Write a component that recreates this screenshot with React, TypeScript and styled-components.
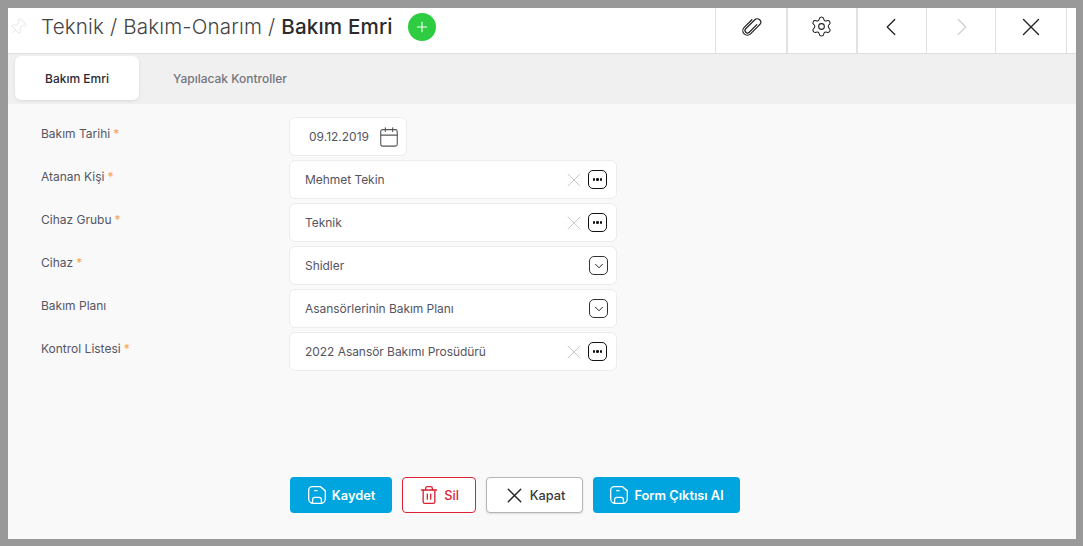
import React from "react";
import styled, { createGlobalStyle } from "styled-components";
import { Settings, ChevronLeft, ChevronRight, X, Calendar, Plus, Pin, ChevronDown, Trash2 } from "lucide-react";

const Global = createGlobalStyle`
  html, body { margin: 0; padding: 0; background: #999; }
  body { font-family: Inter, "Noto Sans", sans-serif; }
  * { box-sizing: border-box; }
`;

const Frame = styled.div`
  width: 1083px; height: 546px; padding: 8px 7px 7px 8px; background: #999; display: flex;
`;
const Win = styled.div`
  flex: 1; display: flex; flex-direction: column; background: #f9f9f9; min-width: 0;
`;
const Header = styled.header`
  height: 46px; flex: none; display: flex; align-items: stretch; background: #fff;
  border-bottom: 1px solid #dedede; padding-right: 9px;
`;
const PinSlot = styled.div`
  width: 34px; flex: none; display: flex; align-items: center; padding: 0 0 8px 1px; color: #dcdcdc;
  svg { transform: rotate(42deg); }
`;
const Title = styled.h1`
  margin: 0; font-size: 20.6px; font-weight: 300; color: #444; display: flex; align-items: center;
  white-space: pre; padding-bottom: 9px; margin-left: -1px; letter-spacing: 0.15px;
  b { font-weight: 500; color: #2b2b2b; }
`;
const AddBtn = styled.button`
  width: 28px; height: 28px; margin-left: 15px; margin-bottom: 8px; align-self: center; border: 0; padding: 0; border-radius: 50%;
  background: #2ecc40; color: #fff; display: flex; align-items: center; justify-content: center;
`;
const HeaderCells = styled.div`
  margin-left: auto; display: flex;
`;
const HeaderCell = styled.button<{ $w: number; $dim?: boolean; $thick?: boolean }>`
  width: ${(p) => p.$w}px; background: #fff; border: 0; border-left: ${(p) => (p.$thick ? 2 : 1)}px solid #e2e2e2;
  padding: 0 ${(p) => (p.$thick ? 2 : 0)}px 8px ${(p) => (p.$dim ? 2 : 0)}px;
  display: flex; align-items: center; justify-content: center;
  color: ${(p) => (p.$dim ? "#d0d0d0" : "#222")};
  &:last-child { border-right: 1px solid #e2e2e2; }
`;
const Tabs = styled.nav`
  height: 50px; flex: none; background: #f0f0f0; display: flex; padding: 2px 0 4px 7px;
`;
const Tab = styled.div<{ $active?: boolean }>`
  width: 124px; height: 44px; display: flex; align-items: center; justify-content: center;
  font-size: 12px; font-weight: 500;
  color: ${(p) => (p.$active ? "#2a2a35" : "#74747e")};
  background: ${(p) => (p.$active ? "#fff" : "transparent")};
  border-radius: 6px;
  box-shadow: ${(p) => (p.$active ? "0 1px 3px rgba(0,0,0,.1)" : "none")};
`;
const TabPlain = styled(Tab)`
  width: 182px;
`;
const Body = styled.main`
  flex: 1; display: flex; flex-direction: column; padding: 13px 0 26px 33px;
`;
const Form = styled.div`
  display: flex; flex-direction: column; gap: 4px;
`;
const Row = styled.div`
  display: flex; align-items: flex-start;
`;
const Label = styled.label`
  width: 248px; flex: none; font-size: 12px; color: #555561; padding-top: 9px; line-height: 15px;
  span { color: #f5a259; margin-left: 3px; }
`;
const Field = styled.div<{ $w: number; $pl: number; $pr: number }>`
  width: ${(p) => p.$w}px; height: 39px; background: #fff; border: 1px solid #ececec; border-radius: 6px;
  display: flex; align-items: center; padding: 0 ${(p) => p.$pr}px 0 ${(p) => p.$pl}px;
  font-size: 12px; color: #555561;
`;
const Value = styled.div<{ $tight?: boolean }>`
  flex: 1; white-space: nowrap; letter-spacing: ${(p) => (p.$tight ? "-0.05px" : "0")};
`;
const ClearIcon = styled.span`
  display: flex; color: #c4c4c4; margin-right: 2px;
`;
const SquareBtn = styled.span<{ $soft?: boolean }>`
  width: 19px; height: 19px; border: 1.4px solid ${(p) => (p.$soft ? "#333" : "#111")}; border-radius: 5px;
  display: flex; align-items: center; justify-content: center; color: #222;
  margin-right: ${(p) => (p.$soft ? -1 : 0)}px;
`;
const Dots = styled.span`
  display: flex; gap: 1px;
  i { width: 2.5px; height: 2.5px; background: #111; border-radius: 50%; }
`;
const CalIcon = styled.span`
  display: flex; color: #555;
`;
const Actions = styled.div`
  margin-top: auto; display: flex; gap: 10px; padding-left: 249px;
`;
const ActionBtn = styled.button<{ $kind: "primary" | "danger" | "plain"; $w: number; $gap: number }>`
  width: ${(p) => p.$w}px; height: 36px; border-radius: 4px; display: flex; align-items: center; justify-content: center; gap: ${(p) => p.$gap}px;
  font: ${(p) => (p.$kind === "primary" ? 600 : 500)} 12.8px Inter, sans-serif;
  padding: 0 ${(p) => (p.$kind === "plain" ? 2 : 0)}px 0 0;
  background: ${(p) => (p.$kind === "primary" ? "#00a5e0" : "#fff")};
  color: ${(p) => (p.$kind === "primary" ? "#fff" : p.$kind === "danger" ? "#dc2235" : "#3a3a3a")};
  border: ${(p) => (p.$kind === "primary" ? "0" : p.$kind === "danger" ? "1px solid #dc2235" : "1px solid #b5b5b5")};
  box-shadow: ${(p) => (p.$kind === "plain" ? "0 1px 2px rgba(0,0,0,.12)" : "none")};
`;

const SaveIcon = () => (
  <svg width="20" height="20" viewBox="0 0 20 20" fill="none" stroke="currentColor" strokeWidth="1.3">
    <path d="M5.2 1.7h8.3l4.8 4.2v7.9a4.5 4.5 0 0 1-4.5 4.5H6.2a4.5 4.5 0 0 1-4.5-4.5V5.2a3.5 3.5 0 0 1 3.5-3.5z" />
    <path d="M7.2 5.6h3.4" />
    <path d="M5.6 18v-3.4a2.2 2.2 0 0 1 2.2-2.2h4.4a2.2 2.2 0 0 1 2.2 2.2V18" />
  </svg>
);

const ClipIcon = () => (
  <svg width="27" height="27" viewBox="0 0 24 24" fill="none" stroke="currentColor" strokeWidth="1.05" strokeLinecap="round">
    <path transform="rotate(45 12 12)" d="M14.2 7.5V17a2.2 2.2 0 0 1-4.4 0V5.7a3.1 3.1 0 0 1 6.2 0" />
    <path transform="rotate(45 12 12)" d="M16 5.7V17.2a4 4 0 0 1-8 0V7.5" />
  </svg>
);

const fields: { label: string; req: boolean; value: string; kind: "dots" | "down" }[] = [
  { label: "Atanan Kişi", req: true, value: "Mehmet Tekin", kind: "dots" },
  { label: "Cihaz Grubu", req: true, value: "Teknik", kind: "dots" },
  { label: "Cihaz", req: true, value: "Shidler", kind: "down" },
  { label: "Bakım Planı", req: false, value: "Asansörlerinin Bakım Planı", kind: "down" },
  { label: "Kontrol Listesi", req: true, value: "2022 Asansör Bakımı Prosüdürü", kind: "dots" },
];

export default function App() {
  return (
    <Frame>
      <Global />
      <Win>
        <Header>
          <PinSlot><Pin size={18} strokeWidth={1} /></PinSlot>
          <Title>Teknik / Bakım-Onarım / <b>Bakım Emri</b></Title>
          <AddBtn><Plus size={16} strokeWidth={1.6} /></AddBtn>
          <HeaderCells>
            <HeaderCell $w={71}><ClipIcon /></HeaderCell>
            <HeaderCell $w={70} $thick><Settings size={23} strokeWidth={1.1} /></HeaderCell>
            <HeaderCell $w={70} $thick><ChevronLeft size={30} strokeWidth={1} /></HeaderCell>
            <HeaderCell $w={69} $dim><ChevronRight size={30} strokeWidth={1} /></HeaderCell>
            <HeaderCell $w={72}><X size={30} strokeWidth={1.1} /></HeaderCell>
          </HeaderCells>
        </Header>
        <Tabs>
          <Tab $active>Bakım Emri</Tab>
          <TabPlain>Yapılacak Kontroller</TabPlain>
        </Tabs>
        <Body>
          <Form>
            <Row>
              <Label>Bakım Tarihi<span>*</span></Label>
              <Field $w={118} $pl={19} $pr={6}>
                <Value>09.12.2019</Value>
                <CalIcon><Calendar size={22} strokeWidth={1.2} /></CalIcon>
              </Field>
            </Row>
            {fields.map((f) => (
              <Row key={f.label}>
                <Label>{f.label}{f.req && <span>*</span>}</Label>
                <Field $w={328} $pl={15} $pr={9}>
                  <Value $tight>{f.value}</Value>
                  {f.kind === "dots" ? (
                    <>
                      <ClearIcon><X size={24} strokeWidth={0.9} /></ClearIcon>
                      <SquareBtn><Dots><i /><i /><i /></Dots></SquareBtn>
                    </>
                  ) : (
                    <SquareBtn $soft><ChevronDown size={14} strokeWidth={1.7} /></SquareBtn>
                  )}
                </Field>
              </Row>
            ))}
          </Form>
          <Actions>
            <ActionBtn $kind="primary" $w={102} $gap={5}><SaveIcon />Kaydet</ActionBtn>
            <ActionBtn $kind="danger" $w={74} $gap={5}><Trash2 size={20} strokeWidth={1.6} />Sil</ActionBtn>
            <ActionBtn $kind="plain" $w={97} $gap={3}><X size={25} strokeWidth={1.3} color="#222" />Kapat</ActionBtn>
            <ActionBtn $kind="primary" $w={147} $gap={5}><SaveIcon />Form Çıktısı Al</ActionBtn>
          </Actions>
        </Body>
      </Win>
    </Frame>
  );
}
